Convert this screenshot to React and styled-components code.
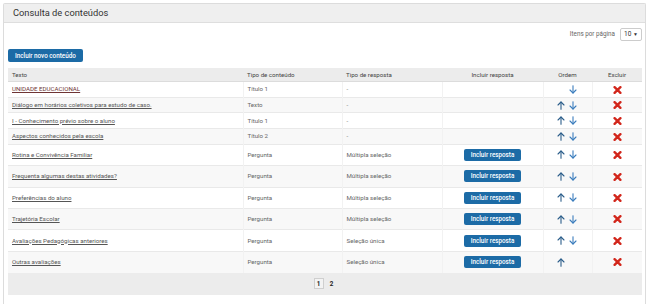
import React from 'react';
import styled, { createGlobalStyle } from 'styled-components';

const GlobalStyle = createGlobalStyle`
  body {
    margin: 0;
    background: #fff;
    font-family: Roboto, 'Liberation Sans', Arial, sans-serif;
  }
`;

const Panel = styled.div`
  margin: 3px 4px 0 3px;
  min-height: 301px;
  border: 1px solid #dcdcdc;
  border-bottom: none;
  border-radius: 2px 2px 0 0;
  box-sizing: border-box;
`;

const PanelHeader = styled.div`
  height: 18px;
  line-height: 18px;
  padding-left: 9px;
  background: #efefef;
  border-bottom: 1px solid #dedede;
  color: #333;
  font-size: 9.3px;
`;

const PanelBody = styled.div`
  padding: 4px 3px 0 4px;
`;

const PageSize = styled.div`
  display: flex;
  justify-content: flex-end;
  align-items: center;
  gap: 5px;
  height: 14px;
  color: #666;
  font-size: 6.3px;
`;

const Select = styled.div`
  display: flex;
  justify-content: space-between;
  align-items: center;
  width: 22px;
  height: 13px;
  padding: 0 3px;
  box-sizing: border-box;
  border: 1px solid #ccc;
  border-radius: 2px;
  color: #333;
  font-size: 6.5px;

  span:last-child {
    font-size: 5px;
  }
`;

const Button = styled.button`
  height: ${(p) => (p.$small ? 12 : 13)}px;
  padding: 0 7px;
  border: none;
  border-radius: 2px;
  background: #1c6ba6;
  color: #fff;
  font-family: inherit;
  font-size: 6.3px;
  font-weight: 500;
  line-height: 12px;
`;

const Toolbar = styled.div`
  margin-top: 8px;
  margin-bottom: 6px;
  display: flex;
`;

const Table = styled.table`
  width: 634px;
  border-collapse: collapse;
  table-layout: fixed;
  font-size: 6.15px;
  color: #666;
`;

const Th = styled.th`
  height: 13px;
  padding: 0 4px;
  background: #ececec;
  border-bottom: 1px solid #dcdcdc;
  font-weight: 400;
  color: #444;
  text-align: ${(p) => (p.$center ? 'center' : 'left')};
`;

const Row = styled.tr`
  height: ${(p) => (p.$tall ? 21.4 : 15.7)}px;
  background: ${(p) => (p.$odd ? '#f8f8f8' : '#fff')};
`;

const Td = styled.td`
  padding: 0 4px;
  border-top: 1px solid #e9e9e9;
  border-right: 1px solid #f2f2f2;
  text-align: ${(p) => (p.$center ? 'center' : 'left')};
  white-space: nowrap;

  &:last-child {
    border-right: none;
  }
`;

const TextLink = styled.a`
  color: ${(p) => (p.$visited ? '#6e3434' : '#555')};
  text-decoration: underline;
`;

const Order = styled.div`
  display: flex;
  justify-content: center;
  gap: 4px;
  padding-right: 2px;
`;

const ArrowSlot = styled.span`
  display: inline-flex;
  width: 8px;
  height: 9px;
  align-items: center;
  justify-content: center;
`;

const Remove = styled.svg`
  width: 9px;
  height: 8px;
  vertical-align: middle;
`;

const Footer = styled.div`
  display: flex;
  justify-content: center;
  align-items: center;
  gap: 3px;
  width: 634px;
  height: 22px;
  background: #ececec;
`;

const PageLink = styled.span`
  display: inline-flex;
  justify-content: center;
  align-items: center;
  width: 10px;
  height: 11px;
  box-sizing: border-box;
  border: ${(p) => (p.$active ? '1px solid #cfcfcf' : '1px solid transparent')};
  background: ${(p) => (p.$active ? '#f3f3f3' : 'transparent')};
  color: #222;
  font-size: 6.3px;
  font-weight: bold;
`;

const Arrow = ({ up }) => (
  <svg width="8" height="9" viewBox="0 0 8 9">
    <g
      fill="none"
      stroke={up ? '#2b5d8a' : '#3b7dbd'}
      strokeWidth="1.1"
      strokeLinecap="round"
      strokeLinejoin="round"
      transform={up ? undefined : 'rotate(180 4 4.5)'}
    >
      <path d="M4 8.3V1" />
      <path d="M1 4L4 1L7 4" />
    </g>
  </svg>
);

const Cross = () => (
  <Remove viewBox="0 0 9 8">
    <path
      d="M1.6 1.2L7.4 6.8M7.4 1.2L1.6 6.8"
      stroke="#d2261b"
      strokeWidth="2.4"
      strokeLinecap="round"
    />
  </Remove>
);

const rows = [
  { text: 'UNIDADE EDUCACIONAL', type: 'Título 1', answer: '-', up: false, down: true, visited: true },
  { text: 'Diálogo em horários coletivos para estudo de caso.', type: 'Texto', answer: '-', up: true, down: true },
  { text: 'I - Conhecimento prévio sobre o aluno', type: 'Título 1', answer: '-', up: true, down: true },
  { text: 'Aspectos conhecidos pela escola', type: 'Título 2', answer: '-', up: true, down: true },
  { text: 'Rotina e Convivência Familiar', type: 'Pergunta', answer: 'Múltipla seleção', button: true, up: true, down: true },
  { text: 'Frequenta algumas destas atividades?', type: 'Pergunta', answer: 'Múltipla seleção', button: true, up: true, down: true },
  { text: 'Preferências do aluno', type: 'Pergunta', answer: 'Múltipla seleção', button: true, up: true, down: true },
  { text: 'Trajetória Escolar', type: 'Pergunta', answer: 'Múltipla seleção', button: true, up: true, down: true },
  { text: 'Avaliações Pedagógicas anteriores', type: 'Pergunta', answer: 'Seleção única', button: true, up: true, down: true },
  { text: 'Outras avaliações', type: 'Pergunta', answer: 'Seleção única', button: true, up: true, down: false },
];

const App = () => (
  <>
    <GlobalStyle />
    <Panel>
      <PanelHeader>Consulta de conteúdos</PanelHeader>
      <PanelBody>
        <PageSize>
          <span>Itens por página</span>
          <Select>
            <span>10</span>
            <span>▼</span>
          </Select>
        </PageSize>
        <Toolbar>
          <Button>Incluir novo conteúdo</Button>
        </Toolbar>
        <Table>
          <colgroup>
            <col style={{ width: 235 }} />
            <col style={{ width: 99 }} />
            <col style={{ width: 100 }} />
            <col style={{ width: 101 }} />
            <col style={{ width: 49 }} />
            <col style={{ width: 50 }} />
          </colgroup>
          <thead>
            <tr>
              <Th>Texto</Th>
              <Th>Tipo de conteúdo</Th>
              <Th>Tipo de resposta</Th>
              <Th $center>Incluir resposta</Th>
              <Th $center>Ordem</Th>
              <Th $center>Excluir</Th>
            </tr>
          </thead>
          <tbody>
            {rows.map((r, i) => (
              <Row key={r.text} $tall={r.button} $odd={i % 2 === 1}>
                <Td>
                  <TextLink $visited={r.visited}>{r.text}</TextLink>
                </Td>
                <Td>{r.type}</Td>
                <Td>{r.answer}</Td>
                <Td $center>{r.button && <Button $small>Incluir resposta</Button>}</Td>
                <Td $center>
                  <Order>
                    <ArrowSlot>{r.up && <Arrow up />}</ArrowSlot>
                    <ArrowSlot>{r.down && <Arrow />}</ArrowSlot>
                  </Order>
                </Td>
                <Td $center>
                  <Cross />
                </Td>
              </Row>
            ))}
          </tbody>
        </Table>
        <Footer>
          <PageLink $active>1</PageLink>
          <PageLink>2</PageLink>
        </Footer>
      </PanelBody>
    </Panel>
  </>
);

export default App;
